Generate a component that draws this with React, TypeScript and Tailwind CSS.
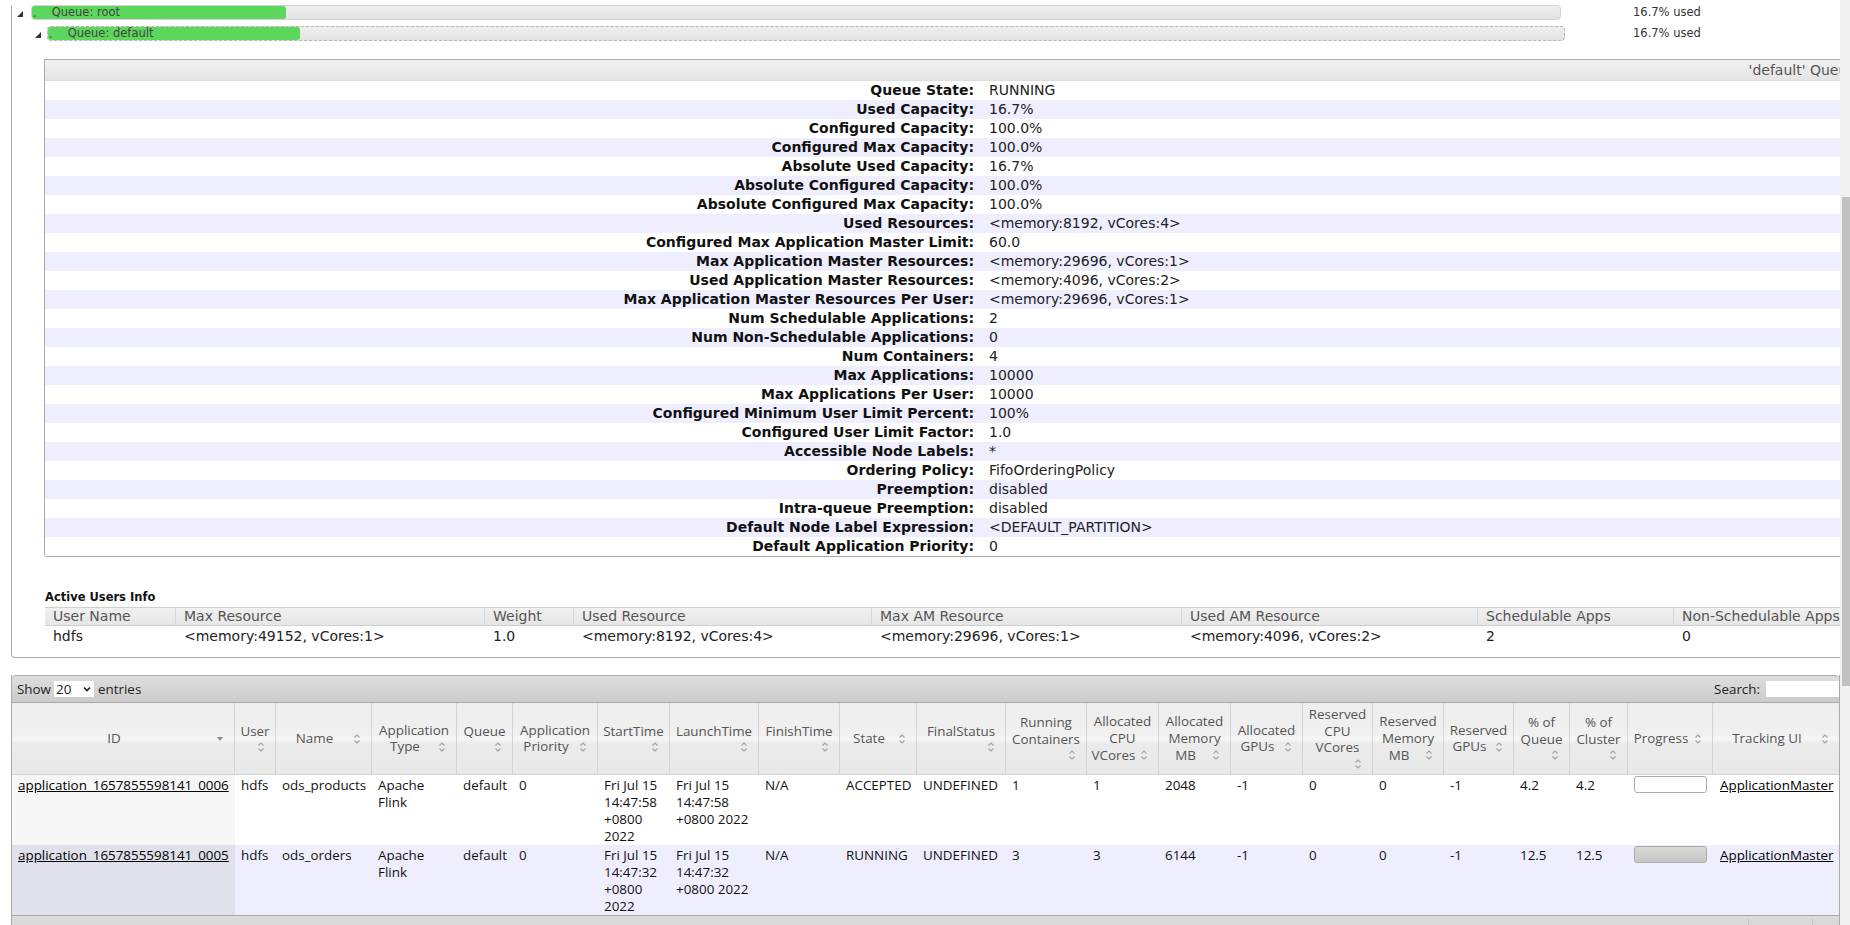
import React from "react";

const queueInfo: [string, string][] = [
  ["Queue State:", "RUNNING"],
  ["Used Capacity:", "16.7%"],
  ["Configured Capacity:", "100.0%"],
  ["Configured Max Capacity:", "100.0%"],
  ["Absolute Used Capacity:", "16.7%"],
  ["Absolute Configured Capacity:", "100.0%"],
  ["Absolute Configured Max Capacity:", "100.0%"],
  ["Used Resources:", "<memory:8192, vCores:4>"],
  ["Configured Max Application Master Limit:", "60.0"],
  ["Max Application Master Resources:", "<memory:29696, vCores:1>"],
  ["Used Application Master Resources:", "<memory:4096, vCores:2>"],
  ["Max Application Master Resources Per User:", "<memory:29696, vCores:1>"],
  ["Num Schedulable Applications:", "2"],
  ["Num Non-Schedulable Applications:", "0"],
  ["Num Containers:", "4"],
  ["Max Applications:", "10000"],
  ["Max Applications Per User:", "10000"],
  ["Configured Minimum User Limit Percent:", "100%"],
  ["Configured User Limit Factor:", "1.0"],
  ["Accessible Node Labels:", "*"],
  ["Ordering Policy:", "FifoOrderingPolicy"],
  ["Preemption:", "disabled"],
  ["Intra-queue Preemption:", "disabled"],
  ["Default Node Label Expression:", "<DEFAULT_PARTITION>"],
  ["Default Application Priority:", "0"],
];

const userCols = [
  { w: "w-[130px]", head: "User Name", val: "hdfs" },
  { w: "w-[309px]", head: "Max Resource", val: "<memory:49152, vCores:1>" },
  { w: "w-[89px]", head: "Weight", val: "1.0" },
  { w: "w-[298px]", head: "Used Resource", val: "<memory:8192, vCores:4>" },
  { w: "w-[310px]", head: "Max AM Resource", val: "<memory:29696, vCores:1>" },
  { w: "w-[296px]", head: "Used AM Resource", val: "<memory:4096, vCores:2>" },
  { w: "w-[196px]", head: "Schedulable Apps", val: "2" },
  { w: "w-[260px]", head: "Non-Schedulable Apps", val: "0" },
];

type Col = { w: number; lines: string[]; icon: "inline" | "below" | "sorted" };

const cols: Col[] = [
  { w: 223, lines: ["ID"], icon: "sorted" },
  { w: 41, lines: ["User"], icon: "below" },
  { w: 96, lines: ["Name"], icon: "inline" },
  { w: 85, lines: ["Application", "Type"], icon: "inline" },
  { w: 56, lines: ["Queue"], icon: "below" },
  { w: 85, lines: ["Application", "Priority"], icon: "inline" },
  { w: 72, lines: ["StartTime"], icon: "below" },
  { w: 89, lines: ["LaunchTime"], icon: "below" },
  { w: 81, lines: ["FinishTime"], icon: "below" },
  { w: 77, lines: ["State"], icon: "inline" },
  { w: 89, lines: ["FinalStatus"], icon: "below" },
  { w: 81, lines: ["Running", "Containers"], icon: "below" },
  { w: 72, lines: ["Allocated", "CPU", "VCores"], icon: "inline" },
  { w: 72, lines: ["Allocated", "Memory", "MB"], icon: "inline" },
  { w: 72, lines: ["Allocated", "GPUs"], icon: "inline" },
  { w: 70, lines: ["Reserved", "CPU", "VCores"], icon: "below" },
  { w: 71, lines: ["Reserved", "Memory", "MB"], icon: "inline" },
  { w: 70, lines: ["Reserved", "GPUs"], icon: "inline" },
  { w: 56, lines: ["% of", "Queue"], icon: "below" },
  { w: 58, lines: ["% of", "Cluster"], icon: "below" },
  { w: 85, lines: ["Progress"], icon: "inline" },
  { w: 126, lines: ["Tracking UI"], icon: "inline" },
];

type Cell = string | string[];

const apps: { id: string; cells: Cell[]; progress: boolean }[] = [
  {
    id: "application_1657855598141_0006",
    cells: ["hdfs", "ods_products", ["Apache", "Flink"], "default", "0", ["Fri Jul 15", "14:47:58", "+0800", "2022"], ["Fri Jul 15", "14:47:58", "+0800 2022"], "N/A", "ACCEPTED", "UNDEFINED", "1", "1", "2048", "-1", "0", "0", "-1", "4.2", "4.2"],
    progress: false,
  },
  {
    id: "application_1657855598141_0005",
    cells: ["hdfs", "ods_orders", ["Apache", "Flink"], "default", "0", ["Fri Jul 15", "14:47:32", "+0800", "2022"], ["Fri Jul 15", "14:47:32", "+0800 2022"], "N/A", "RUNNING", "UNDEFINED", "3", "3", "6144", "-1", "0", "0", "-1", "12.5", "12.5"],
    progress: true,
  },
];

const SortIcon = () => (
  <svg width="8" height="12" viewBox="0 0 8 12" fill="none" stroke="#a2a2a2" strokeWidth="1.1">
    <path d="M1.5 4.5 L4 2 L6.5 4.5" />
    <path d="M1.5 7.5 L4 10 L6.5 7.5" />
  </svg>
);

const SortedIcon = () => (
  <svg width="8" height="6" viewBox="0 0 8 6">
    <polygon points="1,1 7,1 4,5" fill="#8a8a8a" />
  </svg>
);

const Tri = () => (
  <svg width="6" height="6" viewBox="0 0 6 6">
    <polygon points="6,0 6,6 0,6" fill="#333" />
  </svg>
);

function QueueBar({ label, width, dashed }: { label: string; width: string; dashed?: boolean }) {
  return (
    <div
      className={`relative h-[15px] ${width} rounded-[4px] border bg-gradient-to-b from-[#efefef] to-[#e2e2e2] ${
        dashed ? "border-dashed border-[#b5b5b5]" : "border-[#d3d3d3]"
      }`}
    >
      <div className="h-full w-[16.6%] rounded-[3px] bg-[#5bd75b]" />
      <div className="absolute inset-0 flex items-center pl-[1px] text-[11.5px] leading-none text-[#444]">
        <span className="mt-[3px]">.</span>
        <span className="ml-[15px]">{label}</span>
      </div>
    </div>
  );
}

function HeaderCell({ col }: { col: Col }) {
  const last = col.lines[col.lines.length - 1];
  const rest = col.lines.slice(0, -1);
  const icon = col.icon === "sorted" ? <SortedIcon /> : <SortIcon />;
  return (
    <th className="h-[72px] border-r border-b border-[#d3d3d3] px-[4px] py-[2px] text-center align-middle font-normal text-[#555] last:border-r-0">
      <div className="leading-[16.8px]">
        {rest.map((l) => (
          <div key={l} className="whitespace-nowrap">
            {l}
          </div>
        ))}
        {col.icon === "below" ? (
          <>
            <div className="whitespace-nowrap">{last}</div>
            <div className="flex h-[15px] items-center justify-end pr-[6px]">{icon}</div>
          </>
        ) : (
          <div className="whitespace-nowrap">
            <span className="float-right ml-[4px] mr-[6px] flex h-[17px] w-[8px] items-center">{icon}</span>
            {last}
          </div>
        )}
      </div>
    </th>
  );
}

function CellText({ v }: { v: Cell }) {
  if (Array.isArray(v)) {
    return (
      <>
        {v.map((l, i) => (
          <div key={i} className="whitespace-nowrap">
            {l}
          </div>
        ))}
      </>
    );
  }
  return <div className="whitespace-nowrap">{v}</div>;
}

export default function App() {
  return (
    <div className="flex h-[925px] w-[1850px] overflow-hidden bg-white text-black">
      <div className="w-[1840px] shrink-0 overflow-hidden">
        {/* Queue section (scrolled) */}
        <div className="ml-[11px] w-[1930px] rounded-b-[4px] border-b border-l border-[#aaaaaa] pb-[11px] font-['DejaVu_Sans',Verdana,sans-serif]">
          {/* root queue */}
          <div className="mt-[5px] flex h-[15px] items-center">
            <div className="flex w-[19px] items-center pl-[5px] pt-[3px]">
              <Tri />
            </div>
            <QueueBar label="Queue: root" width="w-[1530px]" />
            <span className="ml-[72px] text-[11.5px] leading-none text-[#333]">16.7% used</span>
          </div>
          {/* default queue */}
          <div className="mt-[6px] flex h-[15px] items-center">
            <div className="flex w-[35px] items-center pl-[23px] pt-[3px]">
              <Tri />
            </div>
            <QueueBar label="Queue: default" width="w-[1518px]" dashed />
            <span className="ml-[68px] text-[11.5px] leading-none text-[#333]">16.7% used</span>
          </div>

          {/* queue info panel */}
          <div className="ml-[32px] mt-[18px] w-[1869px] rounded-bl-[3px] border-b border-l border-t border-[#aaaaaa]">
            <div className="h-[21px] border-b border-[#dddddd] bg-gradient-to-b from-[#f1f1f1] to-[#e5e5e5] pr-[8px] text-right text-[14px] leading-[21px] text-[#555]">
              'default' Queue Status
            </div>
            {queueInfo.map(([k, v], i) => (
              <div key={k} className={`flex h-[19px] items-center text-[14px] leading-[19px] ${i % 2 === 1 ? "bg-[#eeeeff]" : "bg-white"}`}>
                <div className="w-[933px] shrink-0 pr-[4px] text-right font-bold text-[#111]">{k}</div>
                <div className="pl-[11px] text-[#222]">{v}</div>
              </div>
            ))}
          </div>

          {/* active users */}
          <div className="ml-[33px] mt-[33px] text-[11.5px] font-bold leading-[14px] text-[#111]">Active Users Info</div>
          <div className="ml-[33px] mt-[3px] w-[1880px] text-[14px]">
            <div className="flex h-[19px] border-b border-t border-[#cfcfcf] bg-gradient-to-b from-[#f0f0f0] to-[#e6e6e6] text-[#555]">
              {userCols.map((c, i) => (
                <div key={c.head} className={`${c.w} shrink-0 pl-[8px] leading-[17px] ${i > 0 ? "border-l border-[#d6d6d6]" : ""}`}>
                  {c.head}
                </div>
              ))}
            </div>
            <div className="flex h-[20px] items-center text-[#222]">
              {userCols.map((c, i) => (
                <div key={c.head} className={`${c.w} shrink-0 ${i > 0 ? "pl-[9px]" : "pl-[8px]"}`}>
                  {c.val}
                </div>
              ))}
            </div>
          </div>
        </div>

        {/* applications table */}
        <div className="ml-[11px] mt-[17px] w-[1829px] border-l border-r border-[#aaaaaa] font-['Open_Sans','Noto_Sans',sans-serif] text-[13.4px]">
          <div className="flex h-[28px] items-center justify-between rounded-t-[4px] border-b border-t border-[#aaaaaa] bg-gradient-to-b from-[#dedede] to-[#cbcbcb] pl-[5px] text-[#222]">
            <div className="flex items-center">
              <span>Show</span>
              <span className="ml-[3px] flex h-[16px] w-[40px] items-center justify-between bg-white pl-[2px] pr-[3px]">
                <span>20</span>
                <svg width="8" height="6" viewBox="0 0 8 6" fill="none" stroke="#222" strokeWidth="1.6">
                  <path d="M1 1.5 L4 4.5 L7 1.5" />
                </svg>
              </span>
              <span className="ml-[4px]">entries</span>
            </div>
            <div className="flex items-center">
              <span>Search:</span>
              <span className="ml-[6px] h-[16px] w-[73px] bg-white" />
            </div>
          </div>
          <table className="w-[1827px] table-fixed border-separate border-spacing-0">
            <colgroup>
              {cols.map((c, i) => (
                <col key={i} style={{ width: c.w }} />
              ))}
            </colgroup>
            <thead>
              <tr className="bg-[linear-gradient(to_bottom,#eeeeee_0%,#f0f0f0_45%,#f6f6f6_50%,#ebebeb_56%,#e8e8e8_100%)]">
                {cols.map((c, i) => (
                  <HeaderCell key={i} col={c} />
                ))}
              </tr>
            </thead>
            <tbody>
              {apps.map((a, r) => (
                <tr key={a.id} className={r % 2 === 1 ? "bg-[#eeeeff]" : "bg-white"}>
                  <td className={`h-[70px] pl-[6px] pt-[2px] align-top leading-[16.9px] ${r % 2 === 1 ? "bg-[#e0e0eb]" : "bg-[#f6f6f6]"}`}>
                    <span className="whitespace-nowrap underline">{a.id}</span>
                  </td>
                  {a.cells.map((v, i) => (
                    <td key={i} className="h-[70px] pl-[6px] pt-[2px] align-top leading-[16.9px] text-[#111]">
                      <CellText v={v} />
                    </td>
                  ))}
                  <td className="h-[70px] pl-[6px] pt-[1px] align-top">
                    <div
                      className={`h-[17px] w-[73px] rounded-[3px] border border-[#aaaaaa] ${
                        a.progress ? "bg-gradient-to-b from-[#d9d9d9] to-[#c6c6c6]" : "bg-white"
                      }`}
                    />
                  </td>
                  <td className="h-[70px] pl-[7px] pt-[2px] align-top leading-[16.9px]">
                    <span className="whitespace-nowrap underline">ApplicationMaster</span>
                  </td>
                </tr>
              ))}
            </tbody>
          </table>
          <div className="flex h-[30px] justify-end border-t border-[#aaaaaa] bg-gradient-to-b from-[#dcdcdc] to-[#cccccc]">
            <div className="mt-[3px] h-[24px] w-[64px] border-l border-[#c4c4c4]" />
            <div className="mt-[3px] h-[24px] w-[27px] border-l border-[#c4c4c4]" />
          </div>
        </div>
      </div>
      {/* vertical scrollbar */}
      <div className="flex w-[10px] shrink-0 flex-col bg-[#f1f1f1] pt-[197px]">
        <div className="ml-[2px] h-[489px] w-[8px] bg-[#c1c1c1]" />
      </div>
    </div>
  );
}
